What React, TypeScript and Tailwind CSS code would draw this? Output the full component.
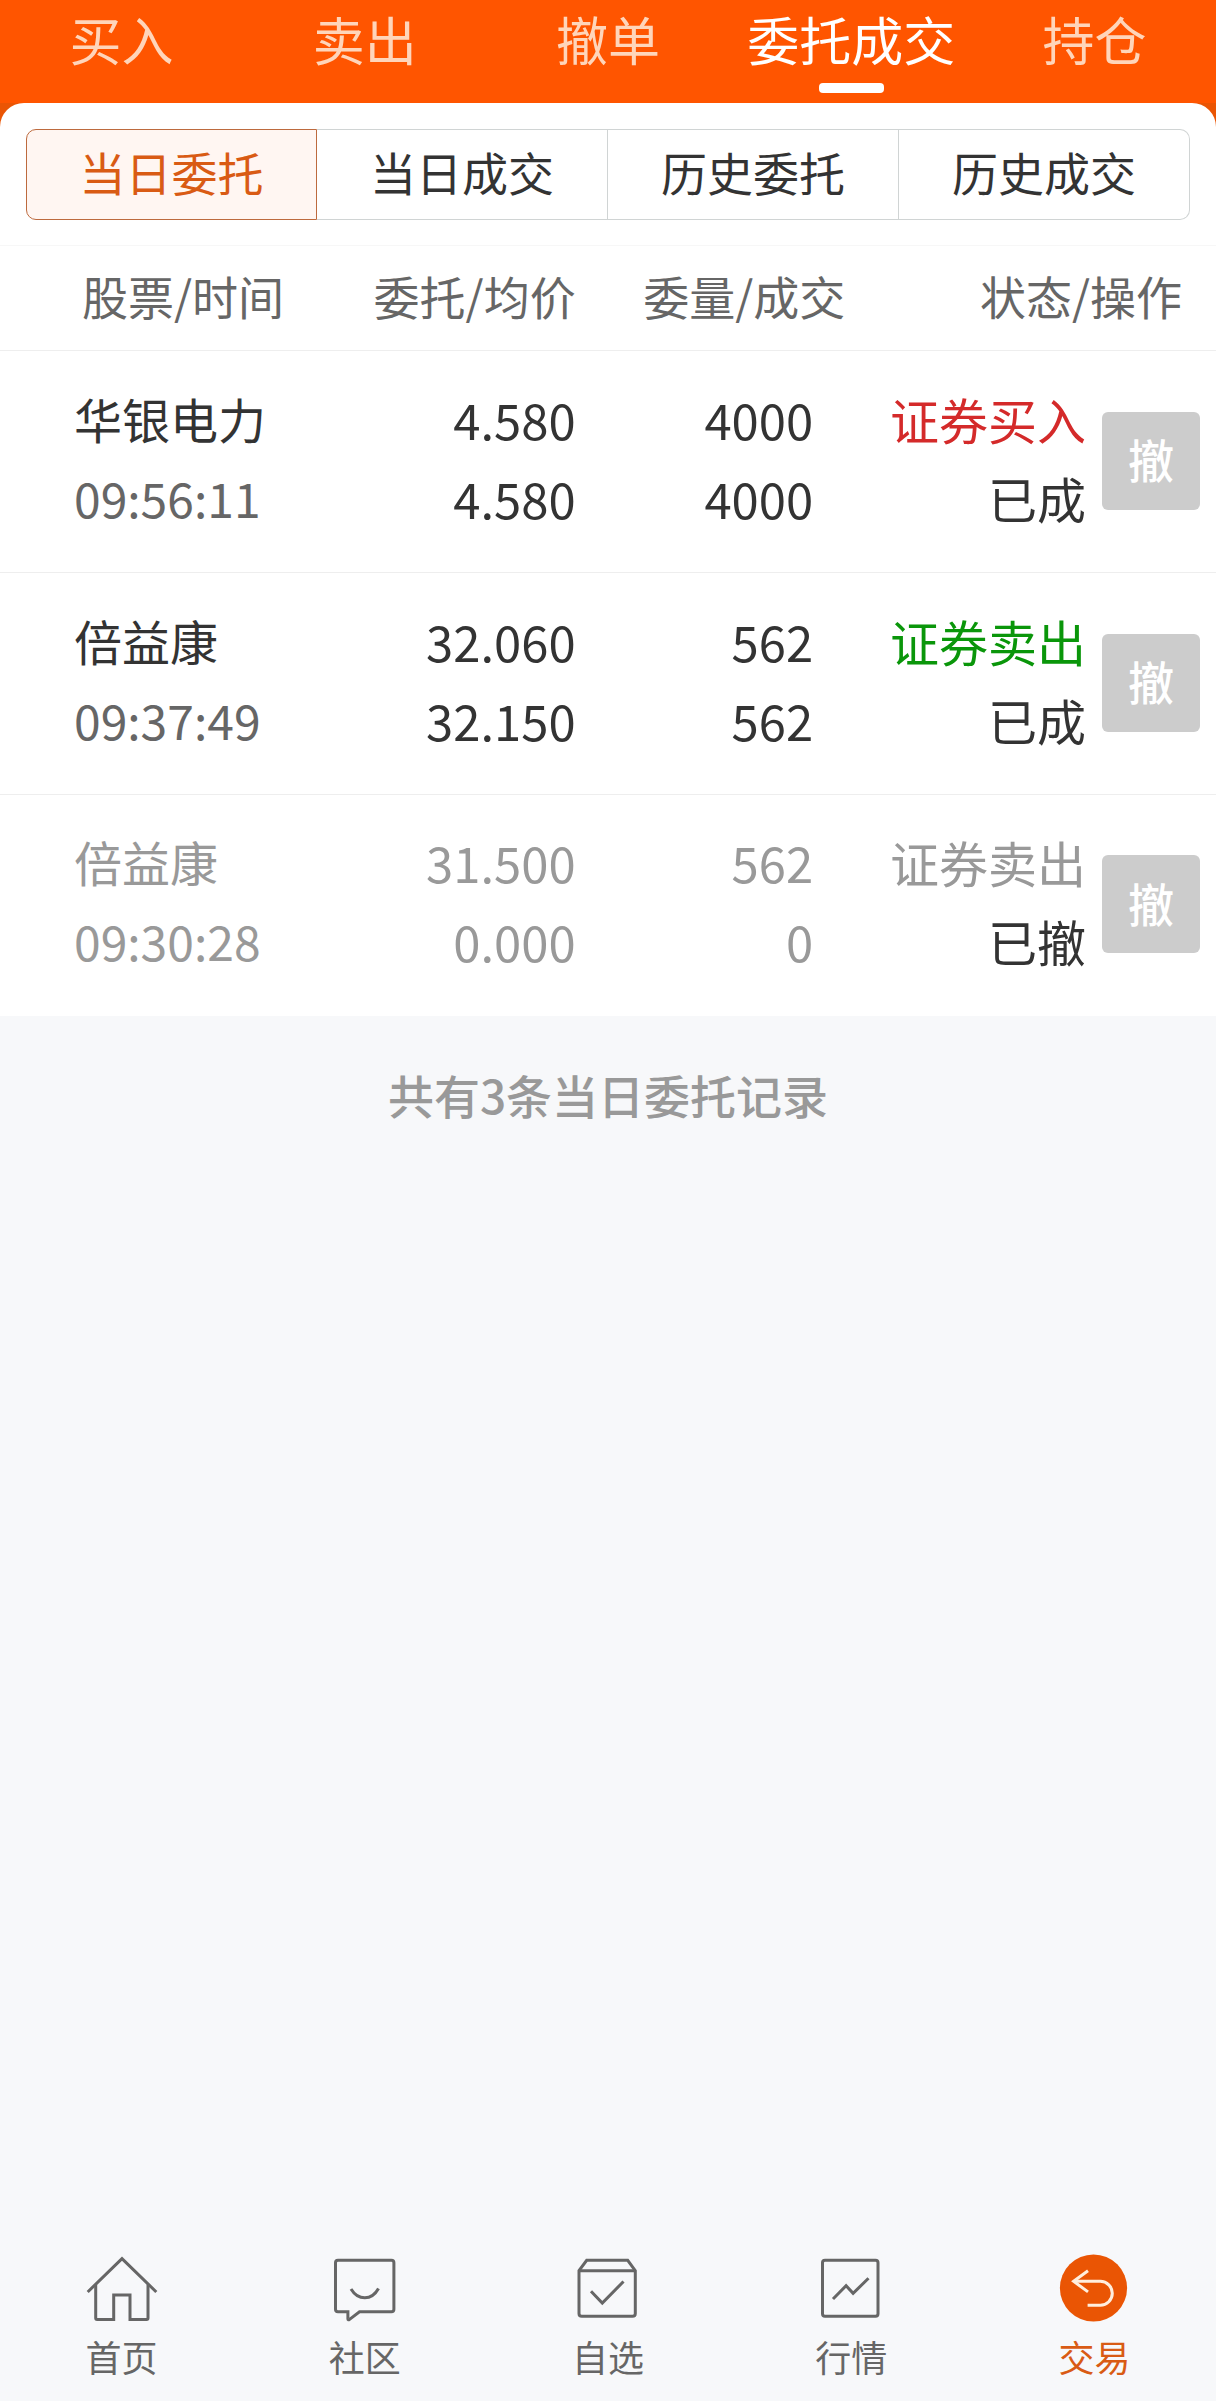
import { useState } from "react";
import clsx from "clsx";

interface Order {
  id: number;
  name: string;
  time: string;
  price: string;
  avgPrice: string;
  amount: string;
  filled: string;
  side: "buy" | "sell";
  status: string;
  cancelled?: boolean;
}

const topTabs = ["买入", "卖出", "撤单", "委托成交", "持仓"];
const subTabs = ["当日委托", "当日成交", "历史委托", "历史成交"];

const orders: Order[] = [
  {
    id: 1,
    name: "华银电力",
    time: "09:56:11",
    price: "4.580",
    avgPrice: "4.580",
    amount: "4000",
    filled: "4000",
    side: "buy",
    status: "已成",
  },
  {
    id: 2,
    name: "倍益康",
    time: "09:37:49",
    price: "32.060",
    avgPrice: "32.150",
    amount: "562",
    filled: "562",
    side: "sell",
    status: "已成",
  },
  {
    id: 3,
    name: "倍益康",
    time: "09:30:28",
    price: "31.500",
    avgPrice: "0.000",
    amount: "562",
    filled: "0",
    side: "sell",
    status: "已撤",
    cancelled: true,
  },
];

function HomeIcon() {
  return (
    <>
      <path d="M1.7 40 36 6.7 70.3 40" />
      <path d="M9.7 32.5V66q0 1.4 1.4 1.4h16.6V43H44v24.4h16.6q1.4 0 1.4-1.4V32.5" />
    </>
  );
}

function CommunityIcon() {
  return (
    <>
      <path d="M9 8.3h53.4q2.5 0 2.5 2.5v46.4q0 2.5-2.5 2.5H30.5L20.3 67.6q-1.4.8-1.4-.8v-7.1H9q-2.5 0-2.5-2.5V10.8q0-2.5 2.5-2.5Z" />
      <path d="M22 37c3.5 5.8 8.5 8.8 13.8 8.8S46 42.8 49.5 36.5" />
    </>
  );
}

function WatchlistIcon() {
  return (
    <>
      <path d="M7 18.7 14.7 8.3h41L63.3 18.7V61.5q0 2.8-2.8 2.8H9.8Q7 64.3 7 61.5Z" />
      <path d="M7 18.7h56.3" />
      <path d="M19 39.3 30.3 51 51.5 29.5" />
    </>
  );
}

function MarketIcon() {
  return (
    <>
      <rect x="7.5" y="8.3" width="55.5" height="56" rx="2.5" />
      <path d="M18 47 31.1 33.7 38.1 41.3 53.5 26.3" />
    </>
  );
}

function TradeIcon() {
  return (
    <>
      <circle cx="35.5" cy="36" r="33.6" fill="#ea5504" stroke="none" />
      <g stroke="#ffeedd">
        <path d="M30 18.8 15.6 29.3 30 39.9" />
        <path d="M16 29.3h26.3a12 12 0 0 1 0 24H29.6" />
      </g>
    </>
  );
}

const bottomNav = [
  { label: "首页", icon: HomeIcon },
  { label: "社区", icon: CommunityIcon },
  { label: "自选", icon: WatchlistIcon },
  { label: "行情", icon: MarketIcon },
  { label: "交易", icon: TradeIcon, active: true },
];

function OrderRow({ order }: { order: Order }) {
  const mainColor = order.cancelled ? "text-[#999]" : "text-[#333]";
  const sideColor = order.side === "buy" ? "text-[#d42a2a]" : "text-[#0a960a]";

  return (
    <tr className="h-[222px] border-b border-[#eee] last:h-[221px] last:border-b-0">
      <td className={clsx("pb-2 pl-[74px] text-[48px] leading-[79px]", mainColor)}>
        <div>{order.name}</div>
        <div className={order.cancelled ? "" : "text-[#666]"}>{order.time}</div>
      </td>
      <td className={clsx("pr-2 pb-2 text-right text-[49px] leading-[79px]", mainColor)}>
        <div>{order.price}</div>
        <div>{order.avgPrice}</div>
      </td>
      <td className={clsx("pr-[38px] pb-2 text-right text-[49px] leading-[79px]", mainColor)}>
        <div>{order.amount}</div>
        <div>{order.filled}</div>
      </td>
      <td className="pb-2 text-right text-[49px] leading-[79px] text-[#333]">
        <div className={order.cancelled ? "text-[#999]" : sideColor}>
          {order.side === "buy" ? "证券买入" : "证券卖出"}
        </div>
        <div>{order.status}</div>
      </td>
      <td className="pb-0.5 pl-4">
        <button
          type="button"
          disabled
          className="block size-[98px] rounded-md bg-[#ccc] pb-1 text-[46px] font-medium text-white"
        >
          撤
        </button>
      </td>
    </tr>
  );
}

export default function App() {
  const [topTab, setTopTab] = useState("委托成交");
  const [subTab, setSubTab] = useState("当日委托");

  return (
    <div className="flex min-h-screen flex-col bg-[#f7f8fa] font-['Noto_Sans_CJK_SC',sans-serif]">
      {/* Trade tabs */}
      <nav className="grid grid-cols-5 bg-[#ff5500]">
        {topTabs.map((tab) => (
          <button
            key={tab}
            type="button"
            onClick={() => setTopTab(tab)}
            className={clsx(
              "flex flex-col items-center gap-1.5 pb-[10px] text-[52px] leading-[77px] whitespace-nowrap",
              tab === topTab ? "text-white" : "text-[#ffd5ba]"
            )}
          >
            {tab}
            <span
              className={clsx(
                "h-[10px] w-[65px] rounded-[4px]",
                tab === topTab && "bg-white"
              )}
            />
          </button>
        ))}
      </nav>

      {/* Orders panel */}
      <main className="bg-[#ea5504]">
        <div className="rounded-t-3xl bg-white pt-[26px]">
          <div className="mx-[26px] mb-[25px] grid grid-cols-4">
            {subTabs.map((tab) => (
              <button
                key={tab}
                type="button"
                onClick={() => setSubTab(tab)}
                className={clsx(
                  "h-[91px] border-y border-r pb-1.5 text-[46px] first:rounded-l-[10px] first:border-l last:rounded-r-[10px]",
                  tab === subTab
                    ? "border-[#bd6a3e] bg-[#fff6f2] text-[#d95b14]"
                    : "border-[#d0d4d4] text-[#333]"
                )}
              >
                {tab}
              </button>
            ))}
          </div>

          <table className="w-full table-fixed">
            <colgroup>
              <col className="w-[24%]" />
              <col className="w-[24%]" />
              <col className="w-[22%]" />
              <col />
              <col className="w-[130px]" />
            </colgroup>
            <thead>
              <tr className="h-[105px] border-t border-b border-t-[#f7f7f7] border-b-[#eee] text-[46px] whitespace-nowrap text-[#666]">
                <th className="pb-1.5 pl-[82px] text-left font-normal">股票/时间</th>
                <th className="pr-2 pb-1.5 text-right font-normal">委托/均价</th>
                <th className="pr-1.5 pb-1.5 text-right font-normal">委量/成交</th>
                <th colSpan={2} className="pr-[34px] pb-1.5 text-right font-normal">
                  状态/操作
                </th>
              </tr>
            </thead>
            <tbody>
              {orders.map((order) => (
                <OrderRow key={order.id} order={order} />
              ))}
            </tbody>
          </table>
        </div>
      </main>

      <p className="pt-[43px] text-center text-[46px] leading-[70px] font-medium text-[#999]">
        共有{orders.length}条当日委托记录
      </p>

      {/* Bottom navigation */}
      <footer className="mt-auto grid grid-cols-5 pb-5">
        {bottomNav.map(({ label, icon: Icon, active }) => (
          <a
            key={label}
            href="#"
            className={clsx(
              "flex flex-col items-center gap-[7px] text-[36px] leading-[50px]",
              active ? "text-[#d95b14]" : "text-[#666]"
            )}
          >
            <svg
              viewBox="0 0 72 72"
              className="size-[72px]"
              fill="none"
              stroke="currentColor"
              strokeWidth="3"
              aria-hidden="true"
            >
              <Icon />
            </svg>
            {label}
          </a>
        ))}
      </footer>
    </div>
  );
}
